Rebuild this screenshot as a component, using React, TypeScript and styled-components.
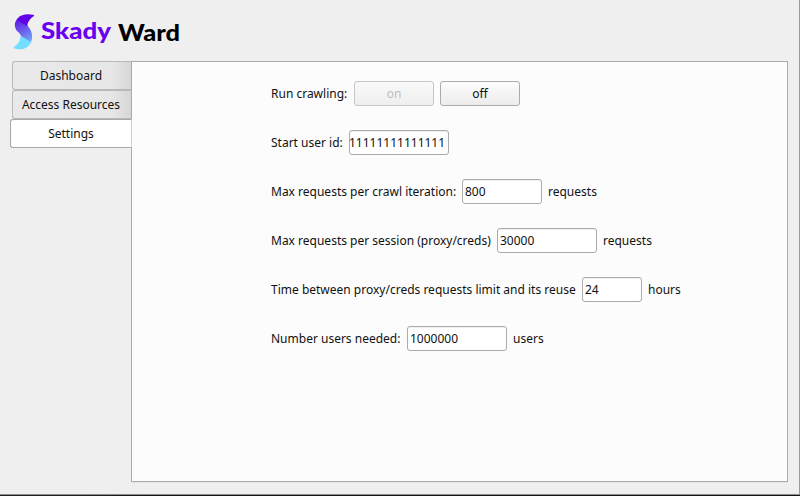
import React from "react";
import styled, { createGlobalStyle } from "styled-components";

const GlobalStyle = createGlobalStyle`
  *, *::before, *::after { box-sizing: border-box; }
  body { margin: 0; background: #efefef; overflow: hidden; }
`;

const Window = styled.div`
  width: 800px;
  height: 496px;
  display: flex;
  flex-direction: column;
  background: #efefef;
  border-right: 1px solid #9b9b9b;
  font: 12px/17px "Noto Sans", sans-serif;
  color: #111;
`;

const Header = styled.header`
  height: 61px;
  flex: none;
  display: flex;
  align-items: flex-start;
  padding: 14px 0 0 12px;
`;

const BrandText = styled.svg`
  margin: -2px 0 0 4px;
  overflow: visible;
`;

const Body = styled.main`
  height: 433px;
  flex: none;
  display: flex;
  padding: 0 11px 12px 10px;
`;

const Tabs = styled.nav`
  width: 122px;
  margin-right: -1px;
  display: flex;
  flex-direction: column;
  align-items: flex-end;
  position: relative;
  z-index: 1;
`;

const Tab = styled.button<{ $active?: boolean }>`
  width: ${(p) => (p.$active ? 122 : 120)}px;
  height: 29px;
  padding: ${(p) => (p.$active ? "0" : "0 2px 0 0")};
  border: 1px solid ${(p) => (p.$active ? "#a8a8a8" : "#b9b9b9")};
  border-right: ${(p) => (p.$active ? "1px solid #d0d0d0" : "1px solid #ababab")};
  border-radius: 3px 0 0 3px;
  background: ${(p) =>
    p.$active ? "#fff" : "linear-gradient(90deg, #e9e9e9 0%, #e7e7e7 83%, #d6d6d6 100%)"};
  font: inherit;
  color: inherit;
`;

const Panel = styled.section`
  width: 657px;
  height: 421px;
  border: 1px solid #ababab;
  background: #fcfcfc;
  box-shadow: 0 1px 0 #e4e4e4;
  padding: 19px 0 0 139px;
  display: flex;
  flex-direction: column;
  gap: 24px;
`;

const Row = styled.div`
  height: 25px;
  display: flex;
  align-items: center;
  gap: 6px;
  white-space: nowrap;
`;

const Label = styled.label<{ $width: number }>`
  width: ${(p) => p.$width}px;
  flex: none;
`;

const Unit = styled.span``;

const Toggle = styled.button`
  width: 80px;
  height: 25px;
  padding: 0;
  border: 1px solid #ababab;
  border-radius: 3px;
  background: linear-gradient(#fcfcfc, #ececec);
  font: inherit;
  color: #111;
  &:disabled {
    border-color: #c6c6c6;
    background: linear-gradient(#f9f9f9, #efefef);
    color: #bebebe;
  }
`;

const Field = styled.input<{ $width: number; $end?: boolean }>`
  width: ${(p) => p.$width}px;
  height: 25px;
  padding: ${(p) => (p.$end ? "0 3px 0 0" : "0 2px")};
  text-indent: ${(p) => (p.$end ? "-1px" : "0")};
  border: 1px solid #ababab;
  border-radius: 3px;
  background: #fff;
  box-shadow: inset 0 1px 0 #efefef;
  font: inherit;
  color: inherit;
  outline: none;
`;

const settings = [
  { label: "Start user id:", labelWidth: 72, value: "11111111111111", width: 100, end: true },
  { label: "Max requests per crawl iteration:", labelWidth: 185, value: "800", width: 80, unit: "requests" },
  { label: "Max requests per session (proxy/creds)", labelWidth: 220, value: "30000", width: 100, unit: "requests" },
  { label: "Time between proxy/creds requests limit and its reuse", labelWidth: 305, value: "24", width: 60, unit: "hours" },
  { label: "Number users needed:", labelWidth: 130, value: "1000000", width: 100, unit: "users" },
];

const Logo = () => (
  <svg width="24" height="36" viewBox="0 0 24 36">
    <defs>
      <linearGradient id="band" x1="0.35" y1="0" x2="0.65" y2="1">
        <stop offset="0" stopColor="#5f1be3" />
        <stop offset="0.5" stopColor="#6b62ee" />
        <stop offset="1" stopColor="#74b4f8" />
      </linearGradient>
    </defs>
    <path d="M6 4C2 8 2 13 5 17C7 19 9 20 9 23L8 25L17 31C21 27 21 20 18 15C17 13 15 12 15 9Z" fill="url(#band)" />
    <path d="M22 1C15-0.5 9 0.5 6 4L5 6L15 12C15.500 9 18 4 22 2Z" fill="#6200ea" />
    <path d="M1 34C5 31 8 28 9 22L19 28C16 35 9 37 1 34Z" fill="#73deff" />
  </svg>
);

export default function App() {
  return (
    <>
      <GlobalStyle />
      <Window>
        <Header>
          <Logo />
          <BrandText width="144" height="40" fontFamily='Lato, sans-serif' fontWeight="900" fontSize="23">
            <text x="1" y="27" textLength="70" lengthAdjust="spacingAndGlyphs" fill="#6a00f0">Skady</text>
            <text x="78" y="29" textLength="62" lengthAdjust="spacingAndGlyphs" fill="#000">Ward</text>
          </BrandText>
        </Header>
        <Body>
          <Tabs>
            <Tab>Dashboard</Tab>
            <Tab>Access Resources</Tab>
            <Tab $active>Settings</Tab>
          </Tabs>
          <Panel>
            <Row>
              <Label $width={77}>Run crawling:</Label>
              <Toggle disabled>on</Toggle>
              <Toggle>off</Toggle>
            </Row>
            {settings.map((s) => (
              <Row key={s.label}>
                <Label $width={s.labelWidth}>{s.label}</Label>
                <Field $width={s.width} $end={s.end} defaultValue={s.value} />
                {s.unit && <Unit>{s.unit}</Unit>}
              </Row>
            ))}
          </Panel>
        </Body>
        <WindowEdge />
      </Window>
    </>
  );
}

const WindowEdge = styled.footer`
  width: 800px;
  height: 2px;
  flex: none;
  border-top: 1px solid #8c8c8c;
  background: linear-gradient(90deg, #202020 0 90px, #14151c 150px);
`;
